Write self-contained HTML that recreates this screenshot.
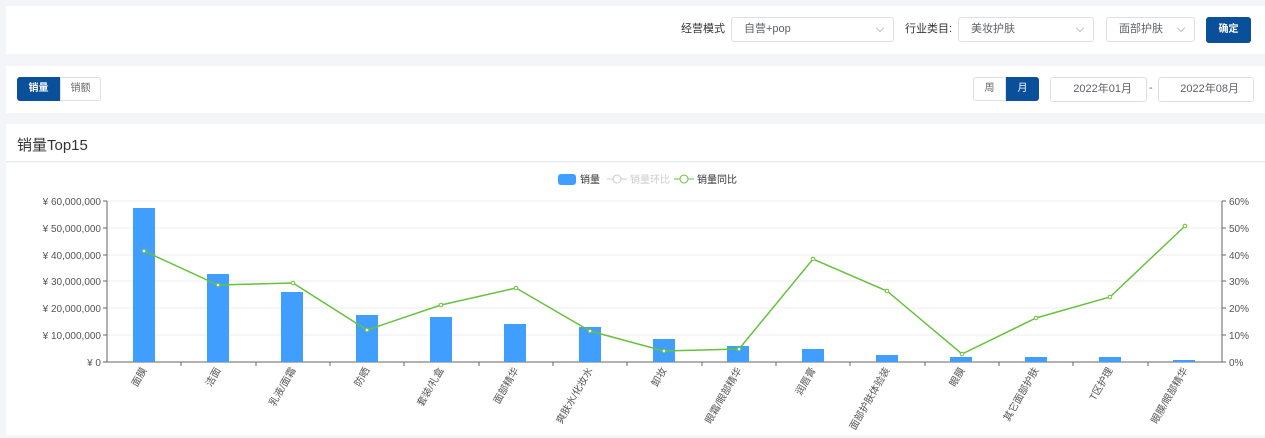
<!DOCTYPE html>
<html><head><meta charset="utf-8"><style>
*{margin:0;padding:0;box-sizing:border-box}
body{width:1265px;height:438px;background:#f3f5f8;font-family:"Liberation Sans","Noto Sans CJK SC",sans-serif;font-size:11px;color:#333;position:relative;overflow:hidden}
.p{position:absolute;left:6px;right:0;background:#fff}
.sel{position:absolute;top:17px;height:25px;border:1px solid #dcdfe6;border-radius:3px;color:#606266;line-height:23px;padding-left:12px;font-size:11px}
.sel:after{content:"";position:absolute;right:10px;top:7px;width:5px;height:5px;border-right:1px solid #c0c4cc;border-bottom:1px solid #c0c4cc;transform:rotate(45deg)}
.lbl{position:absolute;top:17px;line-height:25px;font-size:11px;color:#333}
.btn{position:absolute;background:#0a4f9a;color:#fff;border-radius:3px;text-align:center;font-size:10px}
.b{position:absolute;border:1px solid #dcdfe6;color:#666;text-align:center;font-size:10px;background:#fff}
</style></head><body>
<div class="p" style="top:6px;height:48px"></div>
<div class="lbl" style="left:681px">经营模式</div>
<div class="sel" style="left:731px;width:163px">自营+pop</div>
<div class="lbl" style="left:905px">行业类目:</div>
<div class="sel" style="left:958px;width:136px">美妆护肤</div>
<div class="sel" style="left:1106px;width:89px">面部护肤</div>
<div class="btn" style="left:1206px;top:17px;width:45px;height:26px;line-height:26px;font-weight:bold">确定</div>

<div class="p" style="top:66px;height:47px"></div>
<div class="btn" style="left:17px;top:77px;width:43px;height:24px;line-height:24px;border-radius:3px 0 0 3px;font-weight:bold">销量</div>
<div class="b" style="left:60px;top:77px;width:41px;height:24px;line-height:22px;border-radius:0 3px 3px 0">销额</div>
<div class="b" style="left:973px;top:77px;width:33px;height:24px;line-height:22px;border-radius:3px 0 0 3px">周</div>
<div class="btn" style="left:1006px;top:77px;width:33px;height:24px;line-height:24px;border-radius:0 3px 3px 0">月</div>
<div class="b" style="left:1050px;top:77px;width:97px;height:25px;line-height:23px;border-radius:3px;font-size:11px;color:#606266;text-align:right;padding-right:14px">2022年01月</div>
<div style="position:absolute;left:1149px;top:82px;color:#666">-</div>
<div class="b" style="left:1158px;top:77px;width:96px;height:25px;line-height:23px;border-radius:3px;font-size:11px;color:#606266;text-align:right;padding-right:14px">2022年08月</div>

<div class="p" style="top:124px;height:38px;border-bottom:1px solid #ebeef5"></div>
<div style="position:absolute;left:17px;top:134px;font-size:15px;color:#333">销量Top15</div>
<div class="p" style="top:163px;height:272px"></div>

<svg style="position:absolute;left:0;top:0" width="1265" height="438" font-family="Liberation Sans,Noto Sans CJK SC,sans-serif">
<g font-size="10" fill="#333">
<rect x="558" y="174" width="18" height="11" rx="3" fill="#409eff"/><text x="580" y="183">销量</text>
<line x1="607" y1="179" x2="627" y2="179" stroke="#ccc"/><circle cx="617" cy="179" r="4" fill="#fff" stroke="#ccc"/><text x="630" y="183" fill="#ccc">销量环比</text>
<line x1="674" y1="179" x2="694" y2="179" stroke="#67c23a"/><circle cx="684" cy="179" r="4" fill="#fff" stroke="#67c23a"/><text x="697" y="183">销量同比</text>
</g>
<g stroke="#eee">
<line x1="107" y1="201" x2="1222" y2="201"/><line x1="107" y1="228" x2="1222" y2="228"/><line x1="107" y1="255" x2="1222" y2="255"/><line x1="107" y1="281" x2="1222" y2="281"/><line x1="107" y1="308" x2="1222" y2="308"/><line x1="107" y1="335" x2="1222" y2="335"/>
</g>
<g stroke="#666"><line x1="107" y1="201" x2="107" y2="362"/><line x1="1222" y1="201" x2="1222" y2="362"/><line x1="107" y1="362" x2="1222" y2="362"/>
<path d="M103 201h4M103 228h4M103 255h4M103 281h4M103 308h4M103 335h4M103 362h4M1222 201h4M1222 228h4M1222 255h4M1222 281h4M1222 308h4M1222 335h4M1222 362h4"/>
<path d="M181 362v4M256 362v4M330 362v4M404 362v4M479 362v4M553 362v4M627 362v4M702 362v4M776 362v4M850 362v4M925 362v4M999 362v4M1073 362v4M1148 362v4"/></g>
<g font-size="10" fill="#555" text-anchor="end">
<text x="101" y="205">¥ 60,000,000</text><text x="101" y="232">¥ 50,000,000</text><text x="101" y="259">¥ 40,000,000</text><text x="101" y="285">¥ 30,000,000</text><text x="101" y="312">¥ 20,000,000</text><text x="101" y="339">¥ 10,000,000</text><text x="101" y="366">¥ 0</text>
</g>
<g font-size="10" fill="#555">
<text x="1229" y="205">60%</text><text x="1229" y="232">50%</text><text x="1229" y="259">40%</text><text x="1229" y="285">30%</text><text x="1229" y="312">20%</text><text x="1229" y="339">10%</text><text x="1229" y="366">0%</text>
</g>
<g fill="#409eff">
<rect x="133" y="208" width="22" height="154"/><rect x="207" y="274" width="22" height="88"/><rect x="281" y="292" width="22" height="70"/><rect x="356" y="315" width="22" height="47"/><rect x="430" y="317" width="22" height="45"/><rect x="504" y="324" width="22" height="38"/><rect x="579" y="327" width="22" height="35"/><rect x="653" y="339" width="22" height="23"/><rect x="727" y="346" width="22" height="16"/><rect x="802" y="349" width="22" height="13"/><rect x="876" y="355" width="22" height="7"/><rect x="950" y="357" width="22" height="5"/><rect x="1025" y="357" width="22" height="5"/><rect x="1099" y="357" width="22" height="5"/><rect x="1173" y="360" width="22" height="2"/>
</g>
<polyline fill="none" stroke="#67c23a" stroke-width="1.5" points="144,251 218,285 293,283 367,330 441,305 516,288 590,331 664,351 739,349 813,259 887,291 962,354 1036,318 1110,297 1185,226"/>
<g fill="#fff" stroke="#67c23a" stroke-width="1"><circle cx="144" cy="251" r="1.8"/><circle cx="218" cy="285" r="1.8"/><circle cx="293" cy="283" r="1.8"/><circle cx="367" cy="330" r="1.8"/><circle cx="441" cy="305" r="1.8"/><circle cx="516" cy="288" r="1.8"/><circle cx="590" cy="331" r="1.8"/><circle cx="664" cy="351" r="1.8"/><circle cx="739" cy="349" r="1.8"/><circle cx="813" cy="259" r="1.8"/><circle cx="887" cy="291" r="1.8"/><circle cx="962" cy="354" r="1.8"/><circle cx="1036" cy="318" r="1.8"/><circle cx="1110" cy="297" r="1.8"/><circle cx="1185" cy="226" r="1.8"/></g>
<g font-size="10" fill="#555" text-anchor="end">
<text transform="translate(147,370) rotate(-60)">面膜</text>
<text transform="translate(221,370) rotate(-60)">洁面</text>
<text transform="translate(296,370) rotate(-60)">乳液/面霜</text>
<text transform="translate(370,370) rotate(-60)">防晒</text>
<text transform="translate(444,370) rotate(-60)">套装/礼盒</text>
<text transform="translate(519,370) rotate(-60)">面部精华</text>
<text transform="translate(593,370) rotate(-60)">爽肤水/化妆水</text>
<text transform="translate(667,370) rotate(-60)">卸妆</text>
<text transform="translate(742,370) rotate(-60)">眼霜/眼部精华</text>
<text transform="translate(816,370) rotate(-60)">润唇膏</text>
<text transform="translate(890,370) rotate(-60)">面部护肤体验装</text>
<text transform="translate(965,370) rotate(-60)">眼膜</text>
<text transform="translate(1039,370) rotate(-60)">其它面部护肤</text>
<text transform="translate(1113,370) rotate(-60)">T区护理</text>
<text transform="translate(1188,370) rotate(-60)">眼膜/眼部精华</text>
</g>
</svg>
</body></html>
